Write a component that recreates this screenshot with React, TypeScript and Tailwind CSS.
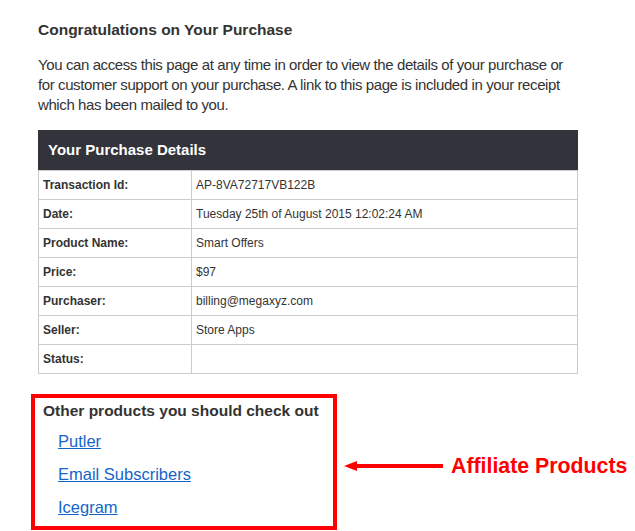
const details = [
  { label: 'Transaction Id:', value: 'AP-8VA72717VB122B' },
  { label: 'Date:', value: 'Tuesday 25th of August 2015 12:02:24 AM' },
  { label: 'Product Name:', value: 'Smart Offers' },
  { label: 'Price:', value: '$97' },
  { label: 'Purchaser:', value: 'billing@megaxyz.com' },
  { label: 'Seller:', value: 'Store Apps' },
  { label: 'Status:', value: '' },
]

const products = ['Putler', 'Email Subscribers', 'Icegram']

function Arrow() {
  return (
    <svg width="99" height="12" viewBox="0 0 99 12" aria-hidden>
      <polygon points="0,6 13,1 13,11" fill="#ff0000" />
      <rect x="10" y="4" width="89" height="4" fill="#ff0000" />
    </svg>
  )
}

export default function App() {
  return (
    <div className="min-h-[531px] w-[635px] bg-white pl-[38px] font-['Liberation_Sans',Arial,sans-serif] text-[#333]">
      <h1 className="pt-[21px] text-[15.5px] font-bold leading-[18px]">Congratulations on Your Purchase</h1>
      <p className="mt-[16px] w-[540px] text-[15px] leading-[20px] tracking-[-0.4px]">
        You can access this page at any time in order to view the details of your purchase or for customer support on your purchase. A link to this page is included in your receipt which has been mailed to you.
      </p>

      <div className="mt-[15px] w-[540px]">
        <div className="flex h-[40px] items-center bg-[#32333b] pl-[10px] text-[15px] font-bold text-white">
          Your Purchase Details
        </div>
        <div className="border-x border-t border-[#cccccc]">
          {details.map((row) => (
            <div key={row.label} className="flex h-[29px] border-b border-[#cccccc] text-[12px]">
              <div className="flex w-[153px] items-center border-r border-[#cccccc] pl-[4px] font-bold">{row.label}</div>
              <div className="flex items-center pl-[4px]">{row.value}</div>
            </div>
          ))}
        </div>
      </div>

      <div className="mt-[20px] -ml-[7px] flex items-center">
        <div className="w-[306px] border-4 border-[#ff0000] pb-[2px] pl-[8px] pt-[4px]">
          <h2 className="text-[15.5px] font-bold leading-[18px]">Other products you should check out</h2>
          <ul className="mt-[5px] pl-[15px]">
            {products.map((name) => (
              <li key={name} className="text-[16.5px] leading-[33px]">
                <a href="#" className="text-[#1565c8] underline">{name}</a>
              </li>
            ))}
          </ul>
        </div>
        <div className="mt-[8px] ml-[7px] flex items-center gap-[8px]">
          <Arrow />
          <span className="text-[21.3px] font-bold leading-[24px] text-[#ff0000]">Affiliate Products</span>
        </div>
      </div>
    </div>
  )
}
